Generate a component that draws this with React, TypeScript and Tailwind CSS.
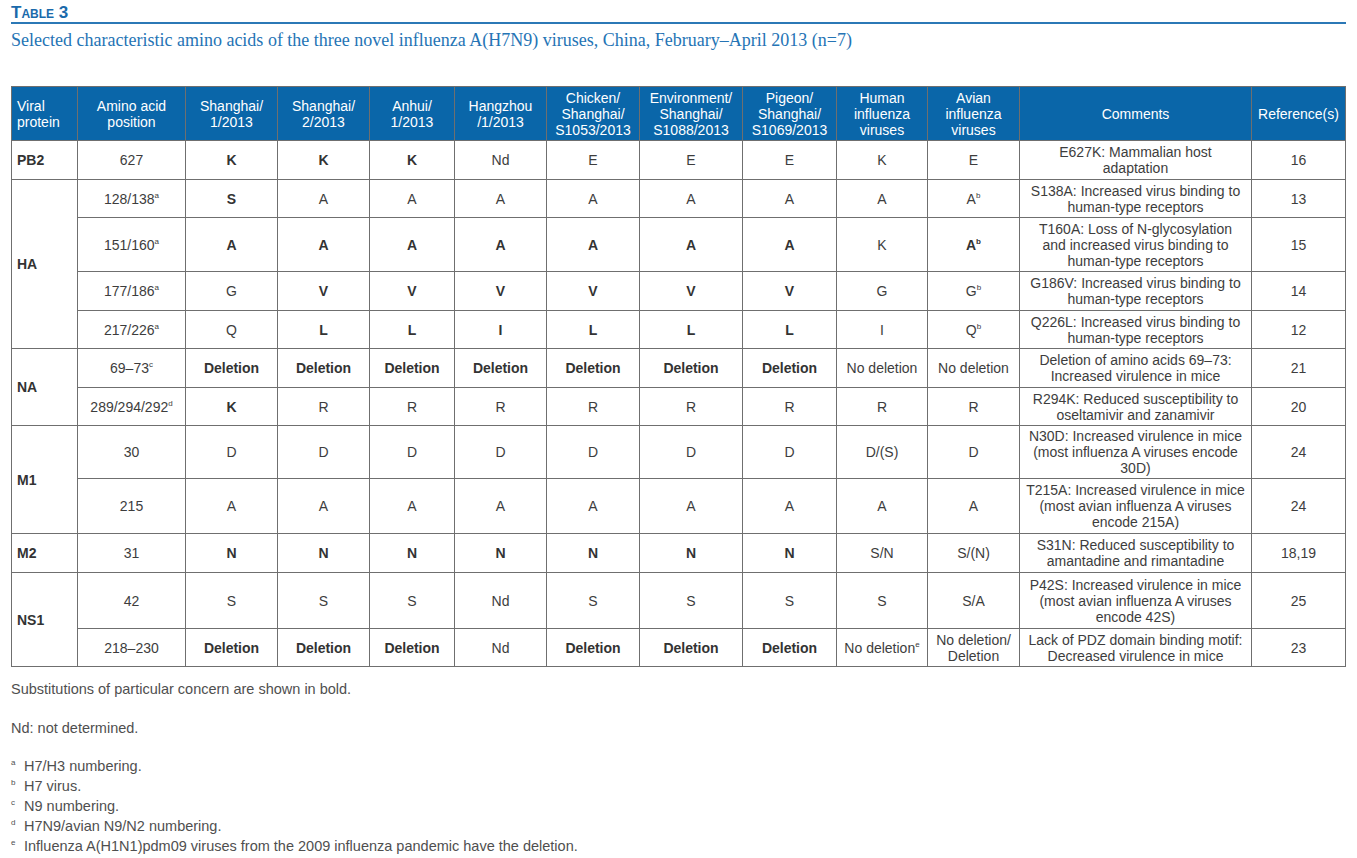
import React from 'react';

// Table 3 – selected amino acids of the novel influenza A(H7N9) viruses

type TdProps = { children?: React.ReactNode; b?: boolean; left?: boolean; rowSpan?: number };

function Td({ children, b, left, rowSpan }: TdProps) {
  return (
    <td
      rowSpan={rowSpan}
      className={`border border-[#6f6f6f] py-0 align-middle ${left ? 'pl-[5px] text-left' : 'px-1 text-center'} ${b ? 'font-bold text-[#333333]' : ''}`}
    >
      {children}
    </td>
  );
}

function Th({ children, left }: { children: React.ReactNode; left?: boolean }) {
  return (
    <th
      className={`border border-[#6f6f6f] py-0 align-middle font-normal text-white ${left ? 'pl-[5px] text-left' : 'px-1 text-center'}`}
    >
      {children}
    </th>
  );
}

function Sup({ c }: { c: string }) {
  return <sup className="top-[-6px] text-[8px]">{c}</sup>;
}

const colWidths = [66, 108, 92, 92, 85, 92, 93, 103, 94, 91, 92, 232, 94];

export default function App() {
  return (
    <div className="h-[858px] w-[1357px] bg-white px-[11px] pt-[4px] font-['Liberation_Sans',Arial,sans-serif] text-[#3d3d3d]">
      {/* Title */}
      <div className="border-b-2 border-[#2b78b6] text-[17px] leading-[18px]">
        <span className="font-bold text-[#1a6aab] [font-variant-caps:small-caps]">Table 3</span>
      </div>
      <p className="mt-[6px] font-['Liberation_Serif',serif] text-[18px] leading-[20px] text-[#2574b5]">
        Selected characteristic amino acids of the three novel influenza A(H7N9) viruses, China, February–April 2013 (n=7)
      </p>

      {/* Table */}
      <table className="mt-[36px] w-[1334px] table-fixed border-collapse border border-[#5a5a5a] text-[14px] leading-[16px]">
        <colgroup>
          {colWidths.map((w, i) => (
            <col key={i} style={{ width: w }} />
          ))}
        </colgroup>
        <thead className="bg-[#0a66a9]">
          <tr className="h-[54px]">
            <Th left>Viral<br />protein</Th>
            <Th>Amino acid<br />position</Th>
            <Th>Shanghai/<br />1/2013</Th>
            <Th>Shanghai/<br />2/2013</Th>
            <Th>Anhui/<br />1/2013</Th>
            <Th>Hangzhou<br />/1/2013</Th>
            <Th>Chicken/<br />Shanghai/<br />S1053/2013</Th>
            <Th>Environment/<br />Shanghai/<br />S1088/2013</Th>
            <Th>Pigeon/<br />Shanghai/<br />S1069/2013</Th>
            <Th>Human<br />influenza<br />viruses</Th>
            <Th>Avian<br />influenza<br />viruses</Th>
            <Th>Comments</Th>
            <Th>Reference(s)</Th>
          </tr>
        </thead>
        <tbody className="whitespace-nowrap">
          <tr className="h-[39px]">
            <Td left b>PB2</Td>
            <Td>627</Td>
            <Td b>K</Td><Td b>K</Td><Td b>K</Td><Td>Nd</Td>
            <Td>E</Td><Td>E</Td><Td>E</Td><Td>K</Td><Td>E</Td>
            <Td>E627K: Mammalian host<br />adaptation</Td>
            <Td>16</Td>
          </tr>

          <tr className="h-[38px]">
            <Td left b rowSpan={4}>HA</Td>
            <Td>128/138<Sup c="a" /></Td>
            <Td b>S</Td><Td>A</Td><Td>A</Td><Td>A</Td>
            <Td>A</Td><Td>A</Td><Td>A</Td><Td>A</Td><Td>A<Sup c="b" /></Td>
            <Td>S138A: Increased virus binding to<br />human-type receptors</Td>
            <Td>13</Td>
          </tr>
          <tr className="h-[54px]">
            <Td>151/160<Sup c="a" /></Td>
            <Td b>A</Td><Td b>A</Td><Td b>A</Td><Td b>A</Td>
            <Td b>A</Td><Td b>A</Td><Td b>A</Td><Td>K</Td><Td b>A<Sup c="b" /></Td>
            <Td>T160A: Loss of N-glycosylation<br />and increased virus binding to<br />human-type receptors</Td>
            <Td>15</Td>
          </tr>
          <tr className="h-[39px]">
            <Td>177/186<Sup c="a" /></Td>
            <Td>G</Td><Td b>V</Td><Td b>V</Td><Td b>V</Td>
            <Td b>V</Td><Td b>V</Td><Td b>V</Td><Td>G</Td><Td>G<Sup c="b" /></Td>
            <Td>G186V: Increased virus binding to<br />human-type receptors</Td>
            <Td>14</Td>
          </tr>
          <tr className="h-[38px]">
            <Td>217/226<Sup c="a" /></Td>
            <Td>Q</Td><Td b>L</Td><Td b>L</Td><Td b>I</Td>
            <Td b>L</Td><Td b>L</Td><Td b>L</Td><Td>I</Td><Td>Q<Sup c="b" /></Td>
            <Td>Q226L: Increased virus binding to<br />human-type receptors</Td>
            <Td>12</Td>
          </tr>

          <tr className="h-[39px]">
            <Td left b rowSpan={2}>NA</Td>
            <Td>69–73<Sup c="c" /></Td>
            <Td b>Deletion</Td><Td b>Deletion</Td><Td b>Deletion</Td><Td b>Deletion</Td>
            <Td b>Deletion</Td><Td b>Deletion</Td><Td b>Deletion</Td>
            <Td>No deletion</Td><Td>No deletion</Td>
            <Td>Deletion of amino acids 69–73:<br />Increased virulence in mice</Td>
            <Td>21</Td>
          </tr>
          <tr className="h-[38px]">
            <Td>289/294/292<Sup c="d" /></Td>
            <Td b>K</Td><Td>R</Td><Td>R</Td><Td>R</Td>
            <Td>R</Td><Td>R</Td><Td>R</Td><Td>R</Td><Td>R</Td>
            <Td>R294K: Reduced susceptibility to<br />oseltamivir and zanamivir</Td>
            <Td>20</Td>
          </tr>

          <tr className="h-[53px]">
            <Td left b rowSpan={2}>M1</Td>
            <Td>30</Td>
            <Td>D</Td><Td>D</Td><Td>D</Td><Td>D</Td>
            <Td>D</Td><Td>D</Td><Td>D</Td><Td>D/(S)</Td><Td>D</Td>
            <Td>N30D: Increased virulence in mice<br />(most influenza A viruses encode<br />30D)</Td>
            <Td>24</Td>
          </tr>
          <tr className="h-[55px]">
            <Td>215</Td>
            <Td>A</Td><Td>A</Td><Td>A</Td><Td>A</Td>
            <Td>A</Td><Td>A</Td><Td>A</Td><Td>A</Td><Td>A</Td>
            <Td>T215A: Increased virulence in mice<br />(most avian influenza A viruses<br />encode 215A)</Td>
            <Td>24</Td>
          </tr>

          <tr className="h-[39px]">
            <Td left b>M2</Td>
            <Td>31</Td>
            <Td b>N</Td><Td b>N</Td><Td b>N</Td><Td b>N</Td>
            <Td b>N</Td><Td b>N</Td><Td b>N</Td><Td>S/N</Td><Td>S/(N)</Td>
            <Td>S31N: Reduced susceptibility to<br />amantadine and rimantadine</Td>
            <Td>18,19</Td>
          </tr>

          <tr className="h-[56px]">
            <Td left b rowSpan={2}>NS1</Td>
            <Td>42</Td>
            <Td>S</Td><Td>S</Td><Td>S</Td><Td>Nd</Td>
            <Td>S</Td><Td>S</Td><Td>S</Td><Td>S</Td><Td>S/A</Td>
            <Td>P42S: Increased virulence in mice<br />(most avian influenza A viruses<br />encode 42S)</Td>
            <Td>25</Td>
          </tr>
          <tr className="h-[38px]">
            <Td>218–230</Td>
            <Td b>Deletion</Td><Td b>Deletion</Td><Td b>Deletion</Td><Td>Nd</Td>
            <Td b>Deletion</Td><Td b>Deletion</Td><Td b>Deletion</Td>
            <Td>No deletion<Sup c="e" /></Td>
            <Td>No deletion/<br />Deletion</Td>
            <Td>Lack of PDZ domain binding motif:<br />Decreased virulence in mice</Td>
            <Td>23</Td>
          </tr>
        </tbody>
      </table>

      {/* Notes */}
      <div className="text-[14.5px] text-[#4f4f4f]">
        <p className="mt-[13px] leading-[18px]">Substitutions of particular concern are shown in bold.</p>
        <p className="mt-[21px] leading-[18px]">Nd: not determined.</p>
        <ul className="mt-[19px] leading-[20px]">
          {[
            ['a', 'H7/H3 numbering.'],
            ['b', 'H7 virus.'],
            ['c', 'N9 numbering.'],
            ['d', 'H7N9/avian N9/N2 numbering.'],
            ['e', 'Influenza A(H1N1)pdm09 viruses from the 2009 influenza pandemic have the deletion.'],
          ].map(([k, t]) => (
            <li key={k} className="flex">
              <span className="w-[13px] shrink-0 pt-[1px] text-[8px] leading-[12px]">{k}</span>
              <span>{t}</span>
            </li>
          ))}
        </ul>
      </div>
    </div>
  );
}
